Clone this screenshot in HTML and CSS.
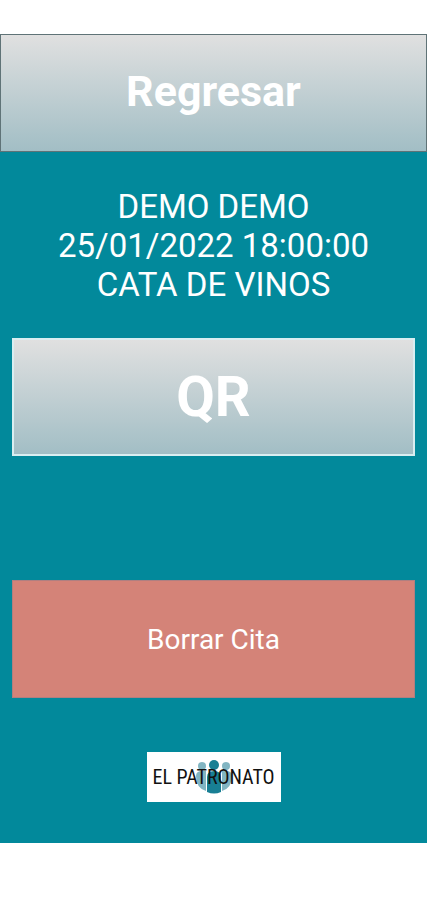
FILE: index.html
```html
<!DOCTYPE html>
<html lang="es">
<head>
    <meta charset="UTF-8">
    <meta name="viewport" content="width=device-width, initial-scale=1.0">
    <title>Cita</title>
    <link rel="stylesheet" href="styles.css">
</head>
<body>
    <main class="screen">
        <button type="button" class="btn btn-back">Regresar</button>
        <div class="content">
            <div class="details">
                <p>DEMO DEMO</p>
                <p>25/01/2022 18:00:00</p>
                <p>CATA DE VINOS</p>
            </div>
            <button type="button" class="btn btn-qr">QR</button>
            <button type="button" class="btn btn-delete">Borrar Cita</button>
            <div class="logo">
                <svg class="logo-people" width="38" height="34" viewBox="0 0 38 34" aria-hidden="true">
                    <g fill="#82b5c2">
                        <circle cx="7" cy="6" r="4"/>
                        <circle cx="31" cy="6" r="4"/>
                        <path d="M1 16q0-5 6-5h4v20Q1 28 1 16z"/>
                        <path d="M37 16q0-5-6-5h-4v20q10-3 10-15z"/>
                    </g>
                    <g fill="#187f94">
                        <circle cx="19" cy="5" r="5"/>
                        <path d="M12 17q0-6 7-6t7 6v15q-7 3-14 0z"/>
                    </g>
                </svg>
                <span class="logo-text">EL PATRONATO</span>
            </div>
        </div>
    </main>
</body>
</html>
```

FILE: styles.css
```css
* {
    box-sizing: border-box;
}
body {
    margin: 0;
    padding: 34px 0;
    background-color: #fff;
    color: #fff;
    font-family: Roboto, sans-serif;
}
.screen {
    background-color: #02899b;
}
.btn {
    display: block;
    width: 100%;
    height: 118px;
    padding: 0;
    color: #fff;
    font-family: inherit;
    cursor: pointer;
}
.btn-back,
.btn-qr {
    background: linear-gradient(#e0e0e0, #a2bec5);
    font-weight: bold;
}
.btn-back {
    border: 1px solid #5f7377;
    padding-bottom: 4px;
    font-size: 43px;
}
.content {
    padding: 35px 12px 41px;
}
.details {
    margin-bottom: 34px;
    font-size: 33px;
    line-height: 39px;
    text-align: center;
}
.details p {
    margin: 0;
}
.btn-qr {
    border: 2px solid #d9eef1;
    font-size: 56px;
}
.btn-delete {
    margin: 124px 0 54px;
    border: 1px solid #b07f80;
    background-color: #d48378;
    font-size: 28px;
}
.logo {
    display: grid;
    place-items: center;
    width: 134px;
    height: 50px;
    margin: 0 auto;
    background-color: #fff;
}
.logo-people,
.logo-text {
    grid-area: 1 / 1;
}
.logo-text {
    color: #111;
    font-family: "Liberation Sans Narrow", "Roboto Condensed", Roboto, sans-serif;
    font-size: 20px;
    white-space: nowrap;
}
```
